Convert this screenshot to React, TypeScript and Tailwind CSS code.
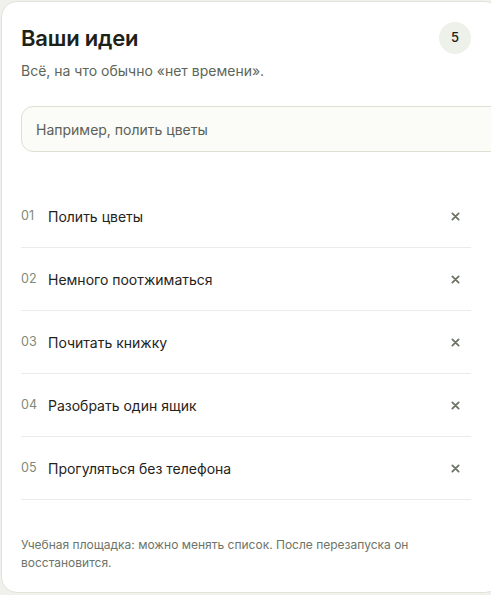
import { useState } from "react";

const initialIdeas = [
  "Полить цветы",
  "Немного поотжиматься",
  "Почитать книжку",
  "Разобрать один ящик",
  "Прогуляться без телефона",
];

function CloseIcon() {
  return (
    <svg width="9" height="9" viewBox="0 0 10 10" fill="none" stroke="currentColor" strokeWidth="2" strokeLinecap="round">
      <path d="M1.5 1.5l7 7M8.5 1.5l-7 7" />
    </svg>
  );
}

export default function App() {
  const [ideas, setIdeas] = useState(initialIdeas);
  const [draft, setDraft] = useState("");

  const removeIdea = (index: number) => {
    setIdeas(ideas.filter((_, i) => i !== index));
  };

  return (
    <div className="h-[595px] overflow-hidden bg-[#f0f1ec] pl-px pt-px font-['Inter','Noto_Sans',sans-serif]">
      <div className="w-[500px] rounded-2xl border border-[#e1e4d9] bg-white pb-5 pl-[19px] pr-[29px] pt-5">
        {/* Header */}
        <div className="flex w-[450px] items-center justify-between">
          <h1 className="text-[22px] font-semibold leading-8 tracking-[-0.2px] text-[#1d2219]">Ваши идеи</h1>
          <span className="flex h-8 w-8 items-center justify-center rounded-full bg-[#eef0ea] text-[13px] font-medium text-[#1d2219]">
            {ideas.length}
          </span>
        </div>
        <p className="mt-[7px] text-[14px] leading-5 text-[#5e6559]">Всё, на что обычно «нет времени».</p>

        {/* Input */}
        <div className="mt-[25px] w-[490px]">
          <input
            value={draft}
            onChange={(e) => setDraft(e.target.value)}
            placeholder="Например, полить цветы"
            className="h-[46px] w-full rounded-xl border border-[#dde0d3] bg-[#fbfbf8] px-[14px] text-[14px] text-[#1d2219] outline-none placeholder:text-[#5b6156]"
          />
        </div>

        {/* List */}
        <ul className="mt-[33px] w-[450px]">
          {ideas.map((idea, i) => (
            <li key={idea} className="flex h-[63px] items-center border-b border-[#ebece8]">
              <span className="w-[27px] text-[12.5px] text-[#808a78]">{String(i + 1).padStart(2, "0")}</span>
              <span className="flex-1 text-[14px] text-[#1f231c]">{idea}</span>
              <button
                onClick={() => removeIdea(i)}
                className="flex h-8 w-8 items-center justify-center text-[#6c7466]"
              >
                <CloseIcon />
              </button>
            </li>
          ))}
        </ul>

        {/* Footer */}
        <p className="mt-9 max-w-[400px] text-[12px] leading-[18px] text-[#6d7468]">
          Учебная площадка: можно менять список. После перезапуска он восстановится.
        </p>
      </div>
    </div>
  );
}
